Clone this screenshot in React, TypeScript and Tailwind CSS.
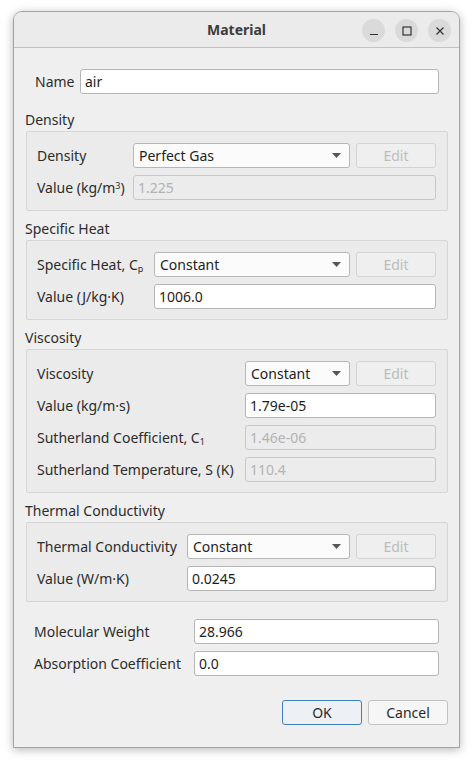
import type { ReactNode } from 'react';

const font = { fontFamily: '"Noto Sans", "DejaVu Sans", sans-serif' };

function Combo({ value }: { value: string }) {
  return (
    <div className="flex-1 h-[25px] flex items-center justify-between pl-[5px] pr-[8px] rounded-[3px] border border-[#b7b7b7] bg-[#fbfbfb] text-[#232323]">
      <span className="whitespace-nowrap">{value}</span>
      <svg width="9" height="5" viewBox="0 0 9 5" className="shrink-0">
        <path d="M0 0 L9 0 L4.5 5 Z" fill="#555" />
      </svg>
    </div>
  );
}

function EditButton() {
  return (
    <div className="ml-[6px] w-[80px] h-[25px] shrink-0 flex items-center justify-center rounded-[3px] border border-[#d3d3d3] bg-[#efefef] text-[#bcbcbc]">
      Edit
    </div>
  );
}

function Field({ value, disabled }: { value: string; disabled?: boolean }) {
  return (
    <div
      className={
        disabled
          ? 'flex-1 h-[25px] flex items-center pl-[4px] rounded-[3px] border border-[#c7c7c7] bg-[#ececec] text-[#b3b3b3]'
          : 'flex-1 h-[25px] flex items-center pl-[4px] rounded-[3px] border border-[#b5b5b5] bg-white text-[#1e1e1e]'
      }
    >
      {value}
    </div>
  );
}

function Row({ label, w, children }: { label: ReactNode; w: string; children: ReactNode }) {
  return (
    <div className="flex items-center">
      <div className={`${w} shrink-0 whitespace-nowrap text-[#2c2c2c]`}>{label}</div>
      {children}
    </div>
  );
}

function Section({ title, children }: { title: string; children: ReactNode }) {
  return (
    <div className="mt-[6px]">
      <div className="h-[21px] mb-[2px] pl-[11px] pt-[2px] flex items-center text-[#2c2c2c]">{title}</div>
      <div className="mx-[12px] mr-[11px] border border-[#d6d6d6] rounded-[2px] bg-[#ebebeb] pt-[11px] pb-[10px] pl-[10px] pr-[11px] flex flex-col gap-[7px]">
        {children}
      </div>
    </div>
  );
}

export default function App() {
  return (
    <div className="w-[472px] h-[764px] bg-white pt-[11px] pl-[13px] text-[14px]" style={font}>
      <div className="w-[447px] h-[737px] rounded-t-[9px] border border-[#a3a3a3] bg-[#efefef] shadow-[0_2px_10px_rgba(0,0,0,0.28)] flex flex-col overflow-hidden">
        <div className="h-[36px] shrink-0 bg-[#ebebeb] border-b border-[#c2c2c2] relative flex items-center justify-center">
          <span className="font-bold text-[#3d3d3d] text-[14px]">Material</span>
          <div className="absolute right-[8px] top-[7px] flex gap-[10px]">
            <div className="w-[23px] h-[23px] rounded-full bg-[#dadada] flex items-center justify-center">
              <svg width="10" height="10" viewBox="0 0 10 10">
                <path d="M1 8.5 H9" stroke="#333" strokeWidth="1.2" />
              </svg>
            </div>
            <div className="w-[23px] h-[23px] rounded-full bg-[#dadada] flex items-center justify-center">
              <svg width="10" height="10" viewBox="0 0 10 10">
                <rect x="1" y="1" width="8" height="8" fill="none" stroke="#333" strokeWidth="1.2" />
              </svg>
            </div>
            <div className="w-[23px] h-[23px] rounded-full bg-[#dadada] flex items-center justify-center">
              <svg width="10" height="10" viewBox="0 0 10 10">
                <path d="M1.5 1.5 L8.5 8.5 M8.5 1.5 L1.5 8.5" stroke="#333" strokeWidth="1.2" />
              </svg>
            </div>
          </div>
        </div>

        <div className="flex flex-col pt-[1px]">
          <div className="mt-[20px] ml-[21px] mr-[20px] flex items-center">
            <div className="w-[45px] shrink-0 text-[#2c2c2c]">Name</div>
            <Field value="air" />
          </div>

          <div className="mt-[8px]">
            <Section title="Density">
              <Row label="Density" w="w-[96px]">
                <Combo value="Perfect Gas" />
                <EditButton />
              </Row>
              <Row
                label={
                  <span>
                    Value (kg/m<sup className="text-[9px]">3</sup>)
                  </span>
                }
                w="w-[96px]"
              >
                <Field value="1.225" disabled />
              </Row>
            </Section>
          </div>

          <Section title="Specific Heat">
            <Row
              label={
                <span>
                  Specific Heat, C<sub className="text-[9px]">p</sub>
                </span>
              }
              w="w-[117px]"
            >
              <Combo value="Constant" />
              <EditButton />
            </Row>
            <Row label="Value (J/kg·K)" w="w-[117px]">
              <Field value="1006.0" />
            </Row>
          </Section>

          <Section title="Viscosity">
            <Row label="Viscosity" w="w-[208px]">
              <Combo value="Constant" />
              <EditButton />
            </Row>
            <Row label="Value (kg/m·s)" w="w-[208px]">
              <Field value="1.79e-05" />
            </Row>
            <Row
              label={
                <span>
                  Sutherland Coefficient, C<sub className="text-[9px]">1</sub>
                </span>
              }
              w="w-[208px]"
            >
              <Field value="1.46e-06" disabled />
            </Row>
            <Row label="Sutherland Temperature, S (K)" w="w-[208px]">
              <Field value="110.4" disabled />
            </Row>
          </Section>

          <Section title="Thermal Conductivity">
            <Row label="Thermal Conductivity" w="w-[150px]">
              <Combo value="Constant" />
              <EditButton />
            </Row>
            <Row label="Value (W/m·K)" w="w-[150px]">
              <Field value="0.0245" />
            </Row>
          </Section>

          <div className="mt-[17px] ml-[20px] mr-[20px] flex flex-col gap-[7px]">
            <div className="flex items-center">
              <div className="w-[160px] shrink-0 whitespace-nowrap text-[#2c2c2c]">Molecular Weight</div>
              <Field value="28.966" />
            </div>
            <div className="flex items-center">
              <div className="w-[160px] shrink-0 whitespace-nowrap text-[#2c2c2c]">Absorption Coefficient</div>
              <Field value="0.0" />
            </div>
          </div>

          <div className="mt-[24px] mr-[11px] flex justify-end gap-[6px]">
            <div className="w-[80px] h-[25px] flex items-center justify-center rounded-[3px] border border-[#3d80b8] bg-[#edf1f5] text-[#2a2a2a]">
              OK
            </div>
            <div className="w-[80px] h-[25px] flex items-center justify-center rounded-[3px] border border-[#c3c3c3] bg-[#f6f6f6] text-[#2a2a2a]">
              Cancel
            </div>
          </div>
        </div>
      </div>
    </div>
  );
}
